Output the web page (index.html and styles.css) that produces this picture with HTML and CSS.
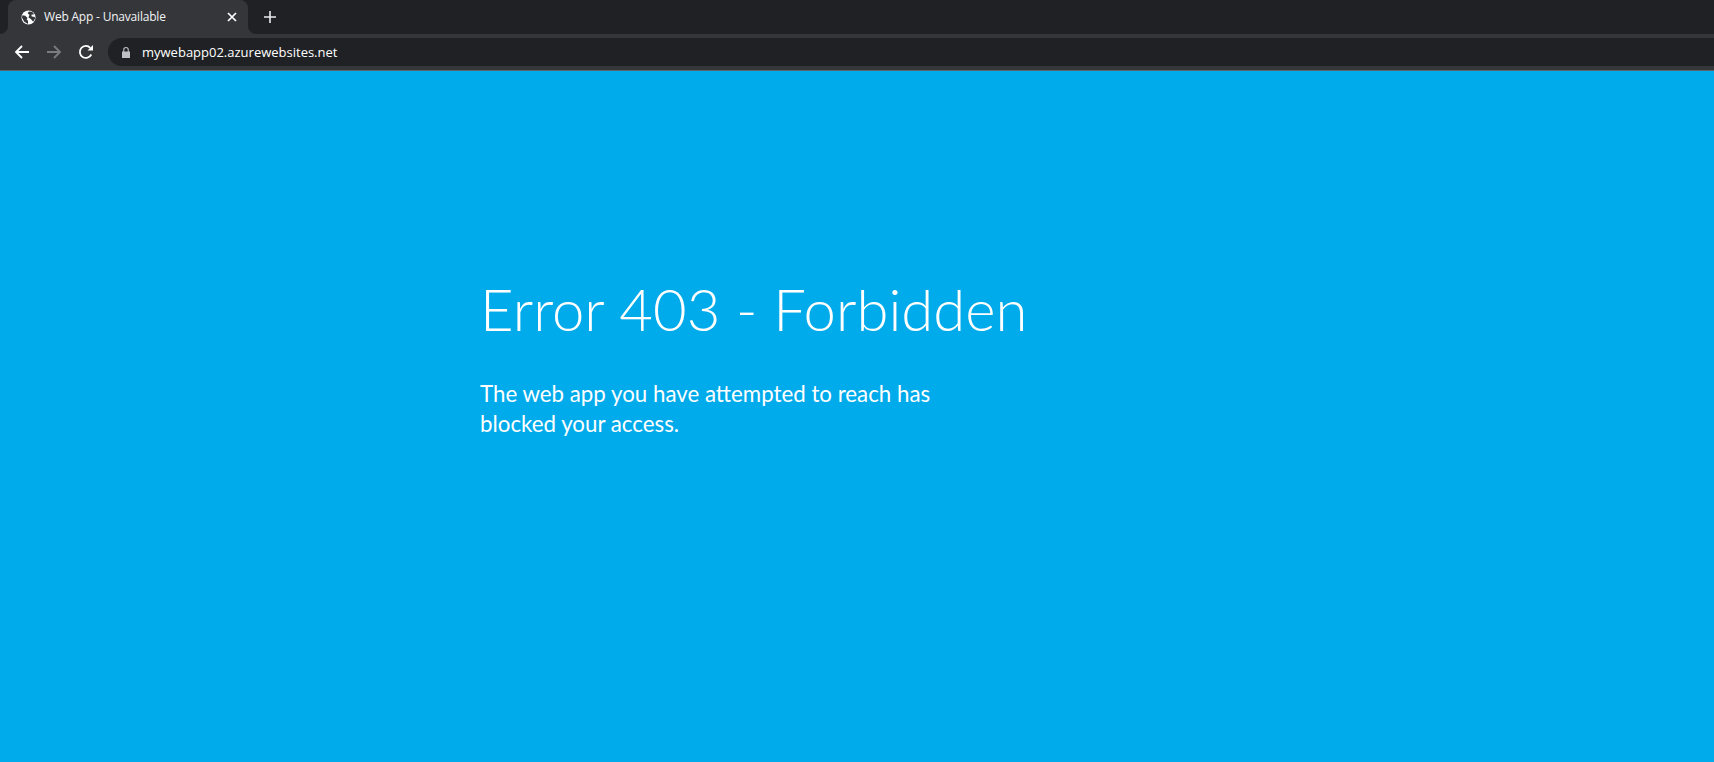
FILE: index.html
```html
<!DOCTYPE html>
<html lang="en">
<head>
<meta charset="utf-8">
<title>Web App - Unavailable</title>
<link rel="stylesheet" href="styles.css">
</head>
<body>
<header class="chrome">
  <div class="tabstrip">
    <div class="tab">
      <svg class="favicon" viewBox="0 0 16 16"><circle cx="8" cy="8" r="7.500" fill="#fff"/><path d="M1.500 5.500l3 .5 2.500 2.500-1 1.500 1.500 1.500v3.500L3.500 12.500 1 8zM8.500 1.500l3.500.5 2 2.500-3 .5.500 2 3.200.5.300 1.500-2 3.500-2.500-3-2.500-1.500 1-3L7 3.500z" fill="#35363a"/></svg>
      <span class="tab-title">Web App - Unavailable</span>
      <svg class="tab-close" viewBox="0 0 10 10"><path d="M1 1l8 8M9 1l-8 8" stroke="#fff" stroke-width="1.700" fill="none"/></svg>
    </div>
    <svg class="newtab" viewBox="0 0 12 12"><path d="M6 0v12M0 6h12" stroke="#e8eaed" stroke-width="1.600" fill="none"/></svg>
  </div>
  <div class="toolbar">
    <div class="navs">
      <svg class="nav" viewBox="0 0 16 16"><path d="M15 8H2M8 2L2 8l6 6" stroke="#fff" stroke-width="1.800" fill="none"/></svg>
      <svg class="nav" viewBox="0 0 16 16"><path d="M1 8h13M8 2l6 6-6 6" stroke="#7b7c7f" stroke-width="1.800" fill="none"/></svg>
      <svg class="nav" viewBox="0 0 16 16"><path d="M13.300 10.500A6 6 0 1 1 12.300 3.800" stroke="#fff" stroke-width="1.800" fill="none"/><path d="M9.500 6.500H15V1z" fill="#fff"/></svg>
    </div>
    <div class="omnibox">
      <svg class="lock" viewBox="0 0 8 11"><path d="M1.200 4.500V2.800a2.800 2.800 0 0 1 5.600 0v1.700H8V11H0V4.500zM2.300 4.500h3.400V2.800a1.700 1.700 0 0 0-3.400 0z" fill="#bdc1c6" fill-rule="evenodd"/></svg>
      <span class="url">mywebapp02.azurewebsites.net</span>
    </div>
  </div>
</header>
<main class="page">
  <div class="message">
    <h1 class="headline">Error 403 - Forbidden</h1>
    <p class="detail">The web app you have attempted to reach has blocked your access.</p>
  </div>
</main>
</body>
</html>
```
FILE: styles.css
```css
* { box-sizing: border-box; }
html, body { margin: 0; height: 100%; }
body {
  display: flex;
  flex-direction: column;
  height: 762px;
  overflow: hidden;
  background: #00abec;
  font-family: "Open Sans", "Noto Sans", sans-serif;
}
.chrome { flex: none; height: 71px; background: #35363a; border-bottom: 1px solid #5f6368; }
.tabstrip {
  display: flex;
  align-items: flex-start;
  height: 34px;
  padding: 0 0 0 8px;
  background: #202124;
}
.tab {
  position: relative;
  display: flex;
  align-items: center;
  width: 240px;
  height: 34px;
  padding: 0 11px 0 13px;
  background: #35363a;
  border-radius: 8px 8px 0 0;
}
.tab::before,
.tab::after {
  content: "";
  position: absolute;
  bottom: 0;
  width: 8px;
  height: 8px;
}
.tab::before {
  left: -8px;
  background: radial-gradient(circle at 0 0, #202124 7.5px, #35363a 8.5px);
}
.tab::after {
  right: -8px;
  background: radial-gradient(circle at 100% 0, #202124 7.5px, #35363a 8.5px);
}
.favicon { width: 15px; height: 15px; flex: none; }
.tab-title {
  flex: 1;
  margin-left: 8px;
  font: 12px/16px "Open Sans", sans-serif;
  letter-spacing: -0.2px;
  color: #f1f3f4;
}
.tab-close { width: 10px; height: 10px; flex: none; }
.newtab { width: 12px; height: 12px; margin: 11px 0 0 16px; flex: none; }
.toolbar {
  display: flex;
  align-items: center;
  gap: 14px;
  height: 36px;
  padding: 0 0 0 14px;
}
.navs { display: flex; gap: 16px; flex: none; }
.nav { width: 16px; height: 16px; flex: none; }
.omnibox {
  flex: 1;
  display: flex;
  align-items: center;
  height: 28px;
  padding-left: 14px;
  background: #202124;
  border-radius: 14px 0 0 14px;
}
.lock { width: 8px; height: 11px; flex: none; }
.url { margin-left: 12px; font: 13px/16px "Open Sans", sans-serif; color: #fff; }
.page { flex: 1; padding: 198px 0 0 480px; }
.message { width: 500px; color: #fff; }
.headline { margin: 0; font: 300 58px/80px "Lato", sans-serif; white-space: nowrap; }
.detail { margin: 30px 0 0; font: 400 22.3px/30px "Lato", sans-serif; width: 470px; }
```
